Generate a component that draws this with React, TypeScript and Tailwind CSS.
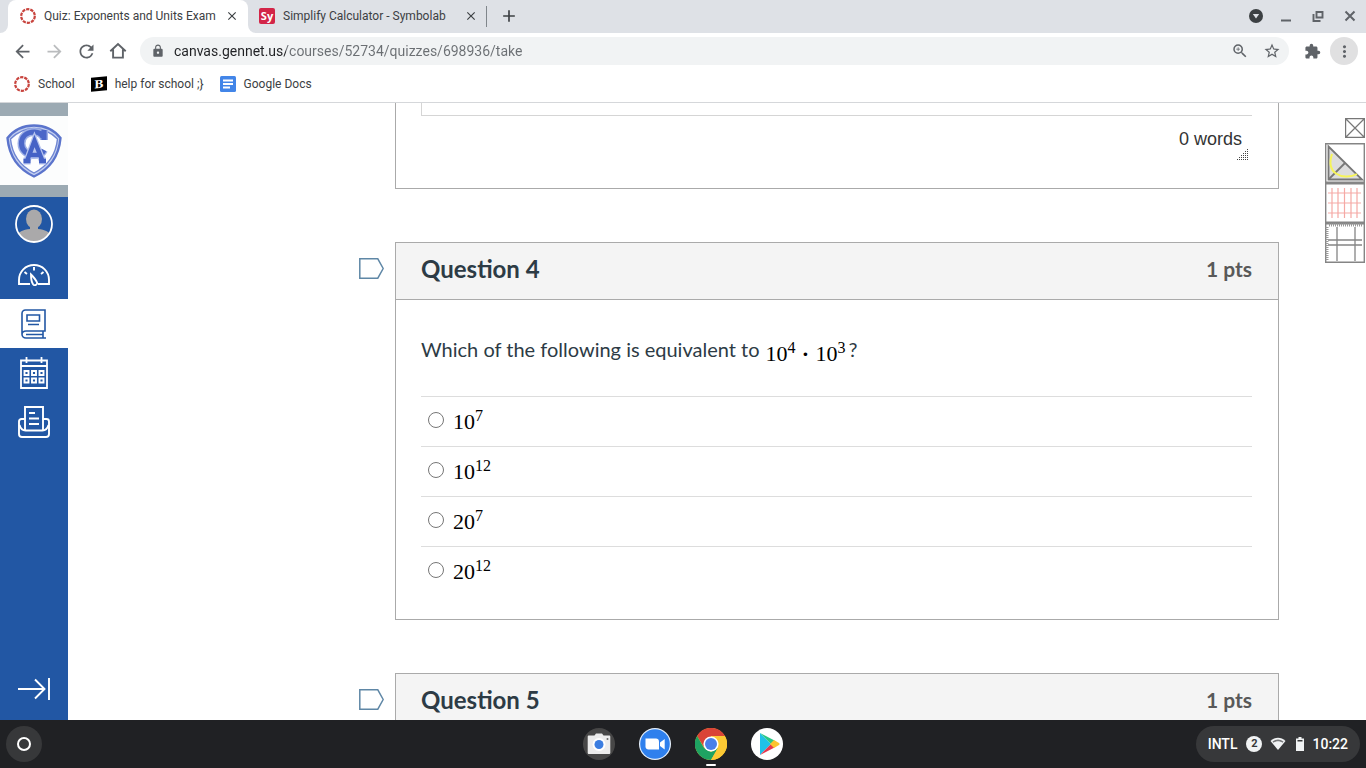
import React, { useState } from "react";
import {
  MdAdd,
  MdArrowBack,
  MdArrowForward,
  MdClose,
  MdExtension,
  MdLock,
  MdMoreVert,
  MdRefresh,
  MdStarBorder,
  MdZoomIn,
} from "react-icons/md";

/* ---------- favicons ---------- */

const CanvasIcon = () => (
  <svg viewBox="0 0 16 16" className="size-4 shrink-0" fill="none" stroke="#c8443e" strokeWidth="2.2">
    <circle cx="8" cy="8" r="6.8" strokeDasharray="3.3 0.97" />
  </svg>
);

const SymbolabIcon = () => (
  <span className="flex size-4 shrink-0 items-center justify-center rounded-xs bg-[#d32548] font-['Open_Sans',sans-serif] text-[11px] font-bold leading-none text-white">
    Sy
  </span>
);

const BrainlyIcon = () => (
  <span className="flex h-[14px] w-4 shrink-0 -skew-y-6 items-center justify-center bg-black font-['DejaVu_Serif',serif] text-[11px] font-bold leading-none text-white">
    B
  </span>
);

const DocsIcon = () => (
  <svg viewBox="0 0 16 16" className="size-4 shrink-0">
    <rect width="16" height="16" rx="1.5" fill="#4285e8" />
    <path d="M3 4.500h10M3 8h10M3 11.500h7" stroke="#fff" strokeWidth="2" />
  </svg>
);

const HomeIcon = () => (
  <svg viewBox="0 0 18 18" className="size-[18px]" fill="none" stroke="#5f6368" strokeWidth="1.9">
    <path d="M1.3 9.2 9 2l7.7 7.2M4.1 7.6v8h9.8v-8" />
  </svg>
);

/* ---------- global nav icons ---------- */

const SchoolCrest = () => (
  <svg viewBox="0 0 56 54" className="h-[54px] w-14" fill="none">
    <path d="M28 1.500C18 1.500 8 6 1.500 14 3 31 12 45 28 52.500 44 45 53 31 54.500 14 48 6 38 1.500 28 1.500Z" fill="#c3cff0" stroke="#5b74cc" strokeWidth="2.400" />
    <path d="M28 4.500C19 4.500 11 8.500 4.500 15 6 30 14.500 42 28 49 41.500 42 50 30 51.500 15 45 8.500 37 4.500 28 4.500Z" fill="#fdfeff" stroke="#6e85d2" strokeWidth="1.400" />
    <path d="M37 13c-1.500-3-4.500-5-8.500-5C20 8 15.500 13 15.500 19.500S20.500 31 28 31c4.500 0 8.500-2 10-5M38 6v10" stroke="#9eb0e6" strokeWidth="8" />
    <path d="M37 13c-1.500-3-4.500-5-8.500-5C20 8 15.500 13 15.500 19.500S20.500 31 28 31c4.500 0 8.500-2 10-5M38 6v10" stroke="#4b67c8" strokeWidth="5.200" />
    <path d="M21 37 28.500 17l8 20M23 31h11M17.500 37h7M33 37h7" stroke="#b7c4ee" strokeWidth="7" />
    <path d="M21 37 28.500 17l8 20M23 31h11M17.500 37h7M33 37h7" stroke="#4562c6" strokeWidth="4.500" />
  </svg>
);

const AvatarIcon = () => (
  <svg viewBox="0 0 38 38" className="size-[38px]">
    <clipPath id="avatar">
      <circle cx="19" cy="19" r="17.500" />
    </clipPath>
    <g clipPath="url(#avatar)" fill="#aaa9aa">
      <ellipse cx="19" cy="14" rx="8" ry="9.500" />
      <path d="M15 20h8v4c7 .5 12 3 13 7v8H2v-8c1-4 6-6.500 13-7Z" />
    </g>
    <circle cx="19" cy="19" r="18" fill="none" stroke="#fff" strokeWidth="1.800" />
  </svg>
);

const DashboardIcon = () => (
  <svg viewBox="0 0 32 22" className="h-[22px] w-8" fill="none" stroke="currentColor" strokeWidth="1.900">
    <path d="M12 20H1v-4C1 7.500 7.500 1 16 1s15 6.500 15 15v4H20" />
    <path d="M16 3v3.500M6.500 8l2.500 2M25.500 8 23 10" />
    <path d="M13 10.500c2 2 5 5.500 6 8 .8 2-2.500 3.500-3.800 2-1.500-2-2.200-6.500-2.200-10Z" />
  </svg>
);

const CoursesIcon = () => (
  <svg viewBox="0 0 26 30" className="h-[30px] w-[26px]" fill="none" stroke="currentColor" strokeWidth="1.600">
    <path d="M25 29H5c-2.400 0-4-1.400-4-3.700V4.500C1 2.400 2.400 1 4.500 1H24v21H5c-2.400 0-4 1.300-4 3.300" />
    <path d="M6 6h12.500v6H6ZM7 15.500h11M5 25.500h17M22 22v7" />
  </svg>
);

const CalendarIcon = () => (
  <svg viewBox="0 0 28 34" className="h-[34px] w-7" fill="none" stroke="currentColor" strokeWidth="1.800">
    <path d="M1 4.500h26V32H1ZM1 10h26M6.500 1v6M21.500 1v6" />
    <path d="M4.500 15h4v4h-4ZM12 15h4v4h-4ZM19.500 15h4v4h-4ZM4.500 22.500h4v4h-4ZM12 22.500h4v4h-4ZM19.500 22.500h4v4h-4Z" strokeWidth="1.900" />
  </svg>
);

const InboxIcon = () => (
  <svg viewBox="0 0 32 32" className="size-8" fill="none" stroke="currentColor" strokeWidth="1.900">
    <path d="M7 13H3.500C2 13 1 14 1 15.500V28c0 2 1 3 3 3h24c2 0 3-1 3-3V15.500c0-1.500-1-2.500-2.500-2.500H25" />
    <path d="M1.500 19c1 3.500 3 5.500 6 5.500h17c3 0 5-2 6-5.500" />
    <path d="M7 24V1h18v23M11 7h6M11 12.500h10M11 18h10" />
  </svg>
);

const CollapseIcon = () => (
  <svg viewBox="0 0 32 24" className="h-6 w-8" fill="none" stroke="currentColor" strokeWidth="1.900">
    <path d="M0 12h26M17 2.500l9.500 9.500-9.500 9.500M31 1v22" />
  </svg>
);

/* ---------- shelf icons ---------- */

const CameraIcon = () => (
  <svg viewBox="0 0 32 32" className="size-8">
    <circle cx="16" cy="16" r="16" fill="#474747" />
    <path d="M6 7.500h5.500L13 5.500h6l1.500 2H26c.8 0 1.300.5 1.300 1.300v16c0 .8-.5 1.200-1.300 1.200H6c-.8 0-1.300-.4-1.300-1.200v-16c0-.8.5-1.300 1.300-1.300Z" fill="#ececec" />
    <circle cx="16" cy="16.500" r="6.500" fill="#fff" />
    <circle cx="16" cy="16.500" r="4.500" fill="#3b7de0" />
    <circle cx="24.500" cy="11" r="1" fill="#666" />
  </svg>
);

const ZoomAppIcon = () => (
  <svg viewBox="0 0 32 32" className="size-8">
    <circle cx="16" cy="16" r="16" fill="#e5f0fd" />
    <circle cx="16" cy="16" r="14.800" fill="#2f80ed" />
    <path d="M6.500 10.500h10.500c1.700 0 3 1.300 3 3v8H9.500c-1.700 0-3-1.300-3-3Z" fill="#fff" />
    <path d="m21 14.500 4.700-3.500v10.500L21 18Z" fill="#fff" />
  </svg>
);

const ChromeIcon = () => (
  <svg viewBox="0 0 32 32" className="size-8">
    <circle cx="16" cy="16" r="16" fill="#fcc934" />
    <path d="M16 16 9.500 20 2.100 8A16 16 0 0 1 29.900 8H16Z" fill="#da4437" />
    <path d="M2.100 8 9.100 20 16 23.900 22.900 20 16 32A16 16 0 0 1 2.100 8Z" fill="#1ea362" />
    <path d="M16 8h13.900A16 16 0 0 1 16 32l6.900-12Z" fill="#fcc934" />
    <circle cx="16" cy="16" r="7.600" fill="#fff" />
    <circle cx="16" cy="16" r="6" fill="#4a80e8" />
  </svg>
);

const PlayIcon = () => (
  <svg viewBox="0 0 32 32" className="size-8">
    <circle cx="16" cy="16" r="16" fill="#fff" />
    <path d="M9 5v22l11-11Z" fill="#21c1e8" />
    <path d="m9 5 14.500 7.500L20 16Z" fill="#2ac786" />
    <path d="m9 27 14.500-7.500L20 16Z" fill="#e8374e" />
    <path d="m23 12 5 3c.8.5.8 1.500 0 2l-5 3-4-4Z" fill="#fcc42d" />
  </svg>
);

/* ---------- browser chrome ---------- */

const BOOKMARKS = [
  { label: "School", icon: <CanvasIcon /> },
  { label: "help for school ;}", icon: <BrainlyIcon /> },
  { label: "Google Docs", icon: <DocsIcon /> },
];

function TabStrip() {
  return (
    <div className="flex h-[33px] items-stretch bg-[#dee1e6] text-xs text-[#3c4043]">
      <div className="flex w-2 bg-white">
        <div className="flex-1 rounded-br-lg bg-[#dee1e6]" />
      </div>
      <div className="flex w-60 items-center gap-2 rounded-t-lg bg-white pb-[2px] pl-3 pr-[9px]">
        <CanvasIcon />
        <span className="flex-1 overflow-hidden whitespace-nowrap">Quiz: Exponents and Units Exam</span>
        <button aria-label="Close tab">
          <MdClose size={14} />
        </button>
      </div>
      <div className="flex w-[238px] bg-white">
        <div className="flex flex-1 items-center gap-2 rounded-bl-lg bg-[#dee1e6] pb-[2px] pl-[11px] pr-2">
          <SymbolabIcon />
          <span className="flex-1 overflow-hidden whitespace-nowrap">Simplify Calculator - Symbolab</span>
          <button aria-label="Close tab">
            <MdClose size={14} />
          </button>
        </div>
      </div>
      <div className="my-[6px] w-px bg-[#80868b]" />
      <button aria-label="New tab" className="flex w-11 items-center justify-center pb-[2px]">
        <MdAdd size={20} />
      </button>
      <div className="ml-auto flex items-center pb-px">
        <button aria-label="Search tabs" className="flex w-7 justify-center">
          <svg viewBox="0 0 14 14" className="size-[14px]">
            <circle cx="7" cy="7" r="7" fill="#3c4043" />
            <path d="M3.800 5h6.400L7 9.500Z" fill="#dee1e6" />
          </svg>
        </button>
        <button aria-label="Minimize" className="flex w-8 justify-center">
          <svg viewBox="0 0 12 12" className="size-3">
            <path d="M1 10.500h10" stroke="#5f6368" strokeWidth="2" />
          </svg>
        </button>
        <button aria-label="Restore" className="flex w-8 justify-center">
          <svg viewBox="0 0 12 12" className="size-3" fill="none" stroke="#5f6368" strokeWidth="1.900">
            <path d="M4.500 2h6v5.500h-6ZM1.500 4v7h7" />
          </svg>
        </button>
        <button aria-label="Close" className="flex w-8 justify-center">
          <svg viewBox="0 0 12 12" className="size-3" fill="none" stroke="#5f6368" strokeWidth="2">
            <path d="m1.500 1.500 9 9M10.500 1.500l-9 9" />
          </svg>
        </button>
      </div>
    </div>
  );
}

function Toolbar() {
  const [url, setUrl] = useState("canvas.gennet.us/courses/52734/quizzes/698936/take");

  return (
    <div className="flex h-9 items-center pl-[6px] pr-2 text-[#5f6368]">
      <button aria-label="Back" className="flex w-8 justify-center">
        <MdArrowBack size={21} />
      </button>
      <button aria-label="Forward" className="flex w-8 justify-center text-[#babcbe]">
        <MdArrowForward size={21} />
      </button>
      <button aria-label="Reload" className="flex w-8 justify-center">
        <MdRefresh size={21} />
      </button>
      <button aria-label="Home" className="flex w-8 justify-center">
        <HomeIcon />
      </button>
      <div className="ml-[6px] flex h-7 flex-1 items-center rounded-full bg-[#f1f3f4] pl-[11px] pr-px">
        <MdLock size={14} />
        <input
          aria-label="Address"
          value={url}
          onChange={(e) => setUrl(e.target.value)}
          className="ml-[9px] flex-1 bg-linear-to-r from-[#202124] from-[112px] to-[#6b6f73] to-[112px] bg-clip-text text-sm text-transparent caret-black outline-none"
        />
        <button aria-label="Zoom" className="flex w-8 justify-center">
          <MdZoomIn size={18} />
        </button>
        <button aria-label="Bookmark this page" className="flex w-8 justify-center">
          <MdStarBorder size={18} />
        </button>
      </div>
      <button aria-label="Extensions" className="ml-[13px] flex w-5 justify-center">
        <MdExtension size={17} />
      </button>
      <button aria-label="Menu" className="ml-2 flex size-7 items-center justify-center rounded-full bg-[#e0e0e1]">
        <MdMoreVert size={19} />
      </button>
    </div>
  );
}

function BookmarksBar() {
  return (
    <div className="flex h-[34px] items-center gap-4 border-b border-[#d5d7da] pb-1 pl-[14px] text-xs text-[#3c4043]">
      {BOOKMARKS.map((b) => (
        <a key={b.label} href="#" className="flex items-center gap-2">
          {b.icon}
          {b.label}
        </a>
      ))}
    </div>
  );
}

/* ---------- page ---------- */

const NAV_ITEMS = [
  { label: "Dashboard", icon: <DashboardIcon /> },
  { label: "Courses", icon: <CoursesIcon />, active: true },
  { label: "Calendar", icon: <CalendarIcon /> },
  { label: "Inbox", icon: <InboxIcon /> },
];

function GlobalNav() {
  return (
    <nav className="flex w-[68px] shrink-0 flex-col bg-[#2257a4] text-white">
      <a href="#" aria-label="Home page" className="bg-[#9caab3] pb-3 pt-[13px]">
        <span className="flex h-[69px] items-center justify-center bg-[#fcfdfd]">
          <SchoolCrest />
        </span>
      </a>
      <a href="#" aria-label="Account" className="flex h-[53px] items-center justify-center">
        <AvatarIcon />
      </a>
      {NAV_ITEMS.map((item) => (
        <a
          key={item.label}
          href="#"
          aria-label={item.label}
          className={
            item.active
              ? "flex h-[49px] items-center justify-center bg-white text-[#2257a4]"
              : "flex h-[49px] items-center justify-center"
          }
        >
          {item.icon}
        </a>
      ))}
      <button aria-label="Minimize navigation" className="mt-auto flex h-[62px] items-center justify-center">
        <CollapseIcon />
      </button>
    </nav>
  );
}

const ANSWERS = [
  { base: "10", exp: "7" },
  { base: "10", exp: "12" },
  { base: "20", exp: "7" },
  { base: "20", exp: "12" },
];

function Power({ base, exp }: { base: string; exp: string }) {
  return (
    <span className="inline-flex items-start font-['Liberation_Serif',serif] text-[22px] leading-7 text-black">
      {base}
      <span className="text-base leading-4">{exp}</span>
    </span>
  );
}

function Question({ title, children }: { title: string; children?: React.ReactNode }) {
  return (
    <section className="mt-[53px] flex items-start">
      <button aria-label={`Flag ${title}`} className="mr-[11px] mt-4">
        <svg viewBox="0 0 25 21" className="h-[21px] w-[25px]" fill="#fff" stroke="#5f87a6" strokeWidth="1.500">
          <path d="M.8.800h18l5.400 9.700-5.400 9.700H.8Z" />
        </svg>
      </button>
      <div className="flex-1 border border-[#aaaaaa]">
        <div className="flex h-[57px] items-center justify-between border-b border-[#aaaaaa] bg-[#f4f4f4] pb-1 pl-[25px] pr-[26px]">
          <h2 className="text-2xl font-bold">{title}</h2>
          <span className="text-[21px] font-bold text-[#595959]">1 pts</span>
        </div>
        {children}
      </div>
    </section>
  );
}

function Quiz() {
  const [answer, setAnswer] = useState<number | null>(null);

  return (
    <main className="flex-1 pl-[291px] font-['Lato',sans-serif] text-[#2d3b45]">
      {/* tail of the essay question above */}
      <div className="ml-9 h-[86px] border-x border-b border-[#aaaaaa] pl-[25px] pr-[26px]">
        <div className="h-[13px] border-b border-l border-[#d5d5d5]" />
        <div className="flex flex-col items-end pr-[3px] pt-[14px] font-['Liberation_Sans',sans-serif] text-lg leading-[18px] text-[#333]">
          <span className="pr-[7px]">0 words</span>
          <svg viewBox="0 0 12 12" className="size-3 shrink-0" stroke="#444" strokeWidth="1" strokeDasharray="1 1">
            <path d="M0 11.500h12M2 9.500h10M4 7.500h8M6 5.500h6M8 3.500h4M10 1.500h2" />
          </svg>
        </div>
      </div>

      <Question title="Question 4">
        <div role="radiogroup" aria-labelledby="question-4-text" className="pb-[23px] pl-[25px] pr-[26px] pt-9">
          <p id="question-4-text" className="flex h-[60px] items-start text-xl leading-[26px]">
            Which of the following is equivalent to
            <span className="ml-[6px] flex pt-1">
              <Power base="10" exp="4" />
              <span className="w-5 text-center font-['Liberation_Serif',serif] text-[22px] font-bold leading-7 text-black">·</span>
              <Power base="10" exp="3" />
            </span>
            <span className="ml-[3px]">?</span>
          </p>
          {ANSWERS.map((a, i) => (
            <label key={i} className="flex h-[50px] items-center border-t border-[#dddddd] pl-[7px]">
              <input
                type="radio"
                name="question-4"
                checked={answer === i}
                onChange={() => setAnswer(i)}
                className="mb-1 mr-[9px] size-4"
              />
              <Power base={a.base} exp={a.exp} />
            </label>
          ))}
        </div>
      </Question>

      <Question title="Question 5" />
    </main>
  );
}

function MathTools() {
  return (
    <aside className="flex w-[87px] shrink-0 flex-col items-end pr-px pt-[15px]">
      <button aria-label="Close tools">
        <svg viewBox="0 0 20 20" className="size-5" fill="#fff" stroke="#777" strokeWidth="1.200">
          <path d="M.6.600h18.800v18.800H.6ZM1 1l18 18M19 1 1 19" />
        </svg>
      </button>
      <div className="mt-[5px] flex flex-col">
        <button aria-label="Protractor">
          <svg viewBox="0 0 40 40" className="size-10">
            <path d="M.7.700h38.600v38.600H.7Z" fill="#fff" stroke="#858585" strokeWidth="1.400" />
            <path d="M3.500 3.500v33H37Z" fill="#ddd" stroke="#777" strokeWidth="1.800" />
            <path d="M4 36 20 20" stroke="#777" strokeWidth="1.800" />
            <path d="M7 11C4 20 6 27 11 30.500S25 35 32 31" fill="none" stroke="#f6f45a" strokeWidth="2" />
          </svg>
        </button>
        <button aria-label="Grid">
          <svg viewBox="0 0 40 40" className="size-10" fill="#fff">
            <path d="M.7.700h38.600v38.600H.7Z" stroke="#858585" strokeWidth="1.400" />
            <path d="M7 5v30M13 5v30M19.500 5v30M26 5v30M32 5v30M3 10h33M3 20h33M3 30h33" stroke="#f5a9a5" strokeWidth="1.200" />
          </svg>
        </button>
        <button aria-label="Rulers">
          <svg viewBox="0 0 40 40" className="size-10" fill="#fff">
            <path d="M.7.700h38.600v38.600H.7Z" stroke="#858585" strokeWidth="1.400" />
            <path d="M12 4v34M30 4v34M3 17h34M3 22h34" stroke="#858585" strokeWidth="1.300" />
            <path d="M4 2h34M2 4v34" stroke="#999" strokeWidth="3" strokeDasharray="1 1" />
          </svg>
        </button>
      </div>
    </aside>
  );
}

/* ---------- shelf ---------- */

const APPS = [
  { label: "Camera", icon: <CameraIcon /> },
  { label: "Zoom", icon: <ZoomAppIcon /> },
  { label: "Chrome", icon: <ChromeIcon />, running: true },
  { label: "Play Store", icon: <PlayIcon /> },
];

function Shelf() {
  return (
    <footer className="grid h-12 shrink-0 grid-cols-[1fr_auto_1fr] items-center bg-[#202124] px-[6px] text-white">
      <button aria-label="Launcher" className="flex size-9 items-center justify-center rounded-full bg-[#37383a]">
        <span className="size-[14px] rounded-full border-2 border-white" />
      </button>
      <div className="flex gap-6">
        {APPS.map((app) => (
          <button key={app.label} aria-label={app.label} className="relative">
            {app.icon}
            {app.running && <span className="absolute -bottom-[6px] left-[11px] h-[2px] w-[10px] rounded-full bg-white" />}
          </button>
        ))}
      </div>
      <button className="flex h-9 items-center justify-self-end rounded-full bg-[#37383a] px-3 text-sm font-medium">
        <span>INTL</span>
        <span className="ml-[9px] flex size-4 items-center justify-center rounded-full bg-[#f1f3f4] text-[11px] font-bold text-[#37383a]">
          2
        </span>
        <svg viewBox="0 0 16 14" className="ml-2 h-[14px] w-4" fill="none">
          <path d="M.5 4C5-.3 11-.3 15.500 4L8 13Z" fill="#f1f3f4" />
          <path d="M2.500 4.500C6 1.800 10 1.800 13.500 4.500l-1 1.200c-2.700-2-6.300-2-9 0Z" fill="#77787a" />
        </svg>
        <svg viewBox="0 0 8 14" className="ml-[10px] h-[14px] w-2">
          <path d="M2.500 0h3v1.500H8V14H0V1.500h2.500Z" fill="#f1f3f4" />
          <path d="M1.500 3h5v1.500h-5Z" fill="#37383a" />
        </svg>
        <span className="ml-2">10:22</span>
      </button>
    </footer>
  );
}

export default function App() {
  return (
    <div className="flex h-screen flex-col overflow-hidden bg-white font-['Roboto',sans-serif]">
      <header className="shrink-0">
        <TabStrip />
        <Toolbar />
        <BookmarksBar />
      </header>
      <div className="flex min-h-0 flex-1 overflow-hidden">
        <GlobalNav />
        <Quiz />
        <MathTools />
      </div>
      <Shelf />
    </div>
  );
}
